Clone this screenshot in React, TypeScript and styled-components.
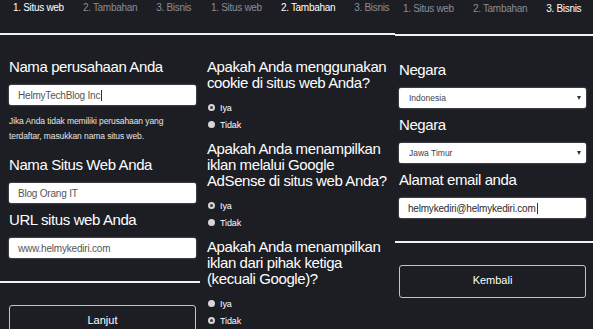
import React, {ReactElement} from "react";
import styled, {createGlobalStyle} from "styled-components";

const GlobalStyle = createGlobalStyle`
  html, body {
    margin: 0;
    padding: 0;
    background: #1c1e24;
  }

  body {
    font-family: "Liberation Sans", Arial, sans-serif;
  }
`;

const Screen = styled.div`
  display: grid;
  grid-template-columns: 200px 195px 198px;
  width: 593px;
  height: 329px;
  overflow: hidden;
  background: #1c1e24;
`;

// each column is a crop of the same wizard page, shifted a little
const Panel = styled.section<{$shift: number; $top?: number}>`
  --shift: ${p => p.$shift}px;
  display: flex;
  flex-direction: column;
  min-width: 0;
  overflow: hidden;
  padding-top: ${p => p.$top ?? 0}px;

  & > * {
    flex-shrink: 0;
  }
`;

const TabBar = styled.nav`
  display: flex;
  gap: 19px;
  height: 35px;
  box-sizing: border-box;
  padding: 2px 0 0 calc(var(--shift) + 4px);
  border-bottom: 2px solid #f2f2f2;
  white-space: nowrap;
`;

const Tab = styled.span<{$active?: boolean}>`
  font-size: 10px;
  line-height: 12px;
  letter-spacing: -0.3px;
  color: ${p => (p.$active ? "#ffffff" : "#8b8d93")};
`;

const Body = styled.div<{$top: number}>`
  display: flex;
  flex-direction: column;
  gap: 9px;
  padding: ${p => p.$top}px 0 0 var(--shift);
`;

const Field = styled.div`
  display: flex;
  flex-direction: column;
`;

const Label = styled.h2`
  margin: 0 0 10px;
  font-size: 15px;
  font-weight: normal;
  line-height: 16px;
  letter-spacing: -0.4px;
  color: #ffffff;
`;

const Help = styled.p`
  max-width: 172px;
  margin: 9px 0 4px;
  font-size: 8.5px;
  line-height: 15px;
  letter-spacing: -0.1px;
  color: #e4e4e4;
`;

const InputBox = styled.div<{$dark?: boolean}>`
  display: flex;
  align-items: center;
  width: 187px;
  height: 20px;
  box-sizing: border-box;
  padding-left: 9px;
  background: #ffffff;
  border-radius: 2px;
  box-shadow: 0 0 2px rgba(255, 255, 255, 0.5);
  font-size: 10px;
  letter-spacing: -0.2px;
  color: ${p => (p.$dark ? "#2b2b2b" : "#555555")};
  white-space: nowrap;
`;

const Caret = styled.span`
  display: inline-block;
  width: 1px;
  height: 11px;
  margin-left: 1px;
  background: #333333;
`;

const SelectBox = styled.div`
  position: relative;
  display: flex;
  align-items: center;
  width: 187px;
  height: 20px;
  box-sizing: border-box;
  padding-left: 10px;
  background: #ffffff;
  border-radius: 2px;
  box-shadow: 0 0 2px rgba(255, 255, 255, 0.5);
  font-size: 8.5px;
  color: #444444;

  &::after {
    content: "";
    position: absolute;
    right: 5px;
    top: 8px;
    border-left: 2px solid transparent;
    border-right: 2px solid transparent;
    border-top: 4px solid #333333;
  }
`;

const Footer = styled.div`
  display: flex;
  flex-direction: column;
  padding: 23px 0 0 var(--shift);
`;

const Rule = styled.hr`
  width: calc(100% + var(--shift));
  margin: 0 0 0 calc(-1 * var(--shift));
  border: 0;
  height: 2px;
  background: #f2f2f2;
`;

const Button = styled.button`
  width: 187px;
  height: 33px;
  margin-top: 22px;
  padding: 0 0 3px;
  background: transparent;
  border: 1px solid #c4c4c4;
  border-radius: 3px;
  font-family: "Liberation Sans", Arial, sans-serif;
  font-size: 11px;
  color: #ffffff;
`;

const Questions = styled.div<{$top: number}>`
  display: flex;
  flex-direction: column;
  gap: 8px;
  padding: ${p => p.$top}px 0 0 var(--shift);
`;

const Question = styled.div`
  display: flex;
  flex-direction: column;
`;

const QuestionText = styled.h2`
  max-width: 184px;
  margin: 0 0 8px;
  font-size: 15px;
  font-weight: normal;
  line-height: 16px;
  letter-spacing: -0.4px;
  color: #ffffff;
`;

const Option = styled.label`
  display: flex;
  align-items: center;
  gap: 5px;
  height: 17px;
  padding-left: 1px;
  font-size: 9px;
  letter-spacing: -0.1px;
  color: #ffffff;
`;

const Dot = styled.span<{$checked?: boolean}>`
  width: 7px;
  height: 7px;
  box-sizing: border-box;
  border-radius: 50%;
  background: ${p => (p.$checked ? "#3a3c42" : "#d6d6d6")};
  border: ${p => (p.$checked ? "2px solid #d6d6d6" : "none")};
`;

const steps = ["1. Situs web", "2. Tambahan", "3. Bisnis"];

function Tabs({active}: {active: number}): ReactElement {
    return (
        <TabBar>
            {steps.map((s, i) => (
                <Tab key={s} $active={i === active}>{s}</Tab>
            ))}
        </TabBar>
    );
}

const questions = [
    {text: "Apakah Anda menggunakan cookie di situs web Anda?", answer: 0},
    {text: "Apakah Anda menampilkan iklan melalui Google AdSense di situs web Anda?", answer: 0},
    {text: "Apakah Anda menampilkan iklan dari pihak ketiga (kecuali Google)?", answer: 1},
];

export default function App(): ReactElement {
    return (
        <>
            <GlobalStyle/>
            <Screen>
                <Panel $shift={9}>
                    <Tabs active={0}/>
                    <Body $top={24}>
                        <Field>
                            <Label>Nama perusahaan Anda</Label>
                            <InputBox>HelmyTechBlog Inc<Caret/></InputBox>
                            <Help>
                                Jika Anda tidak memiliki perusahaan yang terdaftar, masukkan nama situs web.
                            </Help>
                        </Field>
                        <Field>
                            <Label>Nama Situs Web Anda</Label>
                            <InputBox>Blog Orang IT</InputBox>
                        </Field>
                        <Field>
                            <Label>URL situs web Anda</Label>
                            <InputBox>www.helmykediri.com</InputBox>
                        </Field>
                    </Body>
                    <Footer>
                        <Rule/>
                        <Button>Lanjut</Button>
                    </Footer>
                </Panel>

                <Panel $shift={7}>
                    <Tabs active={1}/>
                    <Questions $top={24}>
                        {questions.map(q => (
                            <Question key={q.text}>
                                <QuestionText>{q.text}</QuestionText>
                                <Option><Dot $checked={q.answer === 0}/>Iya</Option>
                                <Option><Dot $checked={q.answer === 1}/>Tidak</Option>
                            </Question>
                        ))}
                    </Questions>
                </Panel>

                <Panel $shift={4} $top={1}>
                    <Tabs active={2}/>
                    <Body $top={26}>
                        <Field>
                            <Label>Negara</Label>
                            <SelectBox>Indonesia</SelectBox>
                        </Field>
                        <Field>
                            <Label>Negara</Label>
                            <SelectBox>Jawa Timur</SelectBox>
                        </Field>
                        <Field>
                            <Label>Alamat email anda</Label>
                            <InputBox $dark>helmykediri@helmykediri.com<Caret/></InputBox>
                        </Field>
                    </Body>
                    <Footer>
                        <Rule/>
                        <Button>Kembali</Button>
                    </Footer>
                </Panel>
            </Screen>
        </>
    );
}
